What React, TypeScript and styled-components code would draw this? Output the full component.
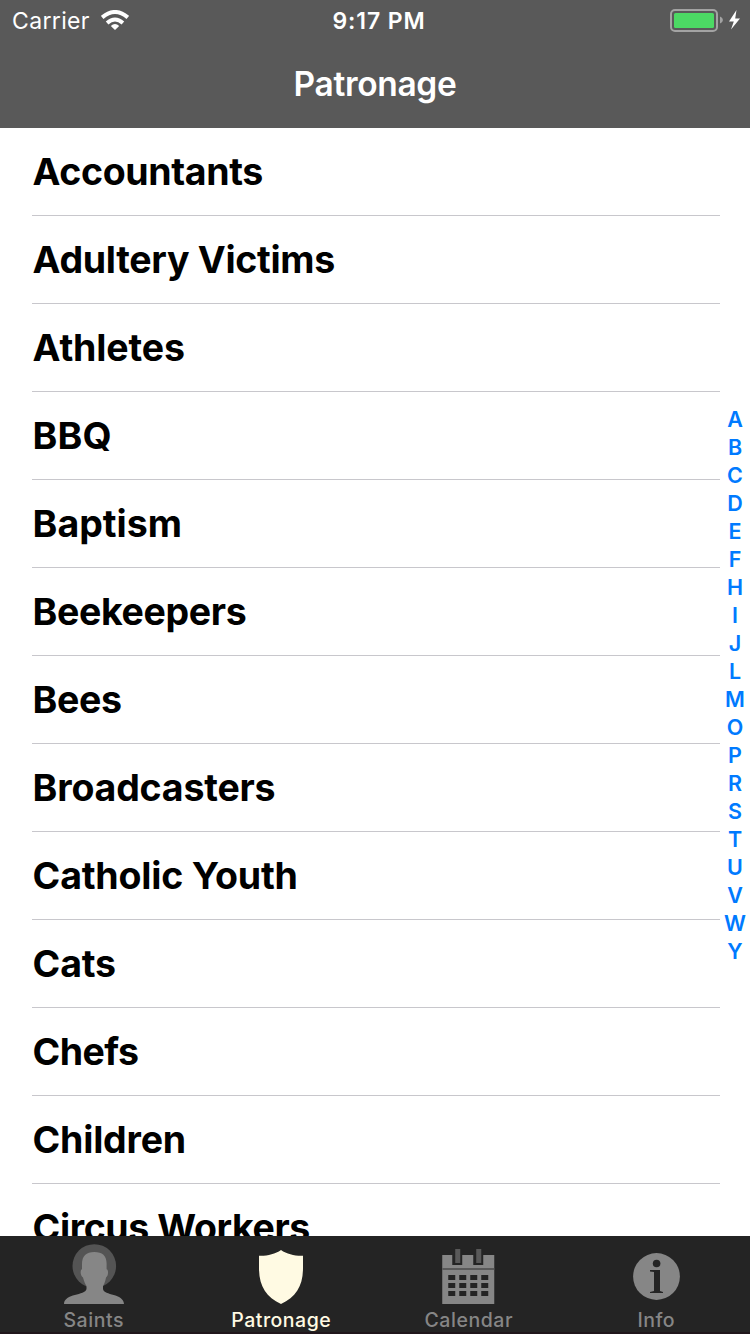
import React from "react";
import styled, { createGlobalStyle } from "styled-components";

const GlobalStyle = createGlobalStyle`
  * { box-sizing: border-box; }
  body { margin: 0; background: #fff; }
`;

const Screen = styled.div`
  width: 750px;
  height: 1334px;
  display: flex;
  flex-direction: column;
  overflow: hidden;
  background: #fff;
  font-family: Inter, "Liberation Sans", sans-serif;
`;

const Header = styled.header`
  flex: none;
  height: 128px;
  background: #595959;
  color: #fff;
`;

const StatusBar = styled.div`
  height: 40px;
  display: grid;
  grid-template-columns: 1fr auto 1fr;
  align-items: center;
  padding: 0 9px 0 12px;
`;

const Carrier = styled.div`
  display: flex;
  align-items: center;
  gap: 11px;
  font-size: 23px;
  line-height: 28px;
  letter-spacing: 0.35px;
  padding-top: 1px;

  svg {
    margin-bottom: 2px;
  }
`;

const Clock = styled.div`
  font-size: 23px;
  line-height: 28px;
  font-weight: 570;
  letter-spacing: 0.9px;
  padding: 1px 0 0 5px;
`;

const Power = styled.div`
  display: flex;
  justify-content: flex-end;
`;

const Title = styled.h1`
  margin: 0;
  height: 88px;
  line-height: 88px;
  text-align: center;
  font-size: 33.5px;
  font-weight: 570;
  letter-spacing: -0.33px;
`;

const Body = styled.main`
  flex: 1;
  min-height: 0;
  display: flex;
  overflow: hidden;
`;

const List = styled.ul`
  list-style: none;
  margin: 0;
  padding: 0 0 0 32px;
  width: 720px;
`;

const Row = styled.li<{ $tracking: number }>`
  height: 88px;
  padding-left: 0.6px;
  border-bottom: 1px solid #c8c7cc;
  line-height: 87px;
  font-size: 37.5px;
  font-weight: 680;
  letter-spacing: ${(p) => p.$tracking}px;
  color: #000;
  white-space: nowrap;
`;

const IndexBar = styled.nav`
  width: 30px;
  padding-top: 277px;
  display: flex;
  flex-direction: column;
  align-items: center;
`;

const IndexLetter = styled.span`
  flex: none;
  height: 28px;
  line-height: 28px;
  font-size: 21.5px;
  font-weight: 600;
  color: #007aff;
`;

const TabBar = styled.nav`
  flex: none;
  height: 98px;
  display: flex;
  background: #242424;
  border-bottom: 2px solid #21161c;
`;

const Tab = styled.div<{ $active?: boolean }>`
  width: 187.5px;
  display: flex;
  flex-direction: column;
  align-items: center;
  color: ${(p) => (p.$active ? "#fffae3" : "#868686")};
`;

const TabIcon = styled.svg`
  flex: none;
  display: block;
  width: 64px;
  height: 72px;
`;

const TabLabel = styled.span<{ $tracking: number }>`
  line-height: 24px;
  font-size: 19.5px;
  font-weight: 470;
  letter-spacing: ${(p) => p.$tracking}px;
`;

const rows: [string, number][] = [
  ["Accountants", -0.38],
  ["Adultery Victims", -0.3],
  ["Athletes", -0.15],
  ["BBQ", 0.2],
  ["Baptism", 0],
  ["Beekeepers", -0.35],
  ["Bees", -0.35],
  ["Broadcasters", -0.19],
  ["Catholic Youth", -0.19],
  ["Cats", -0.2],
  ["Chefs", -0.55],
  ["Children", -0.22],
  ["Circus Workers", -0.4],
];

const WifiIcon = () => (
  <svg width="28" height="20" viewBox="0 0 28 20">
    <g fill="none" stroke="#fff" strokeWidth="4">
      <path d="M1.2 7.4Q14-3.4 26.8 7.4" />
      <path d="M6.1 12.9Q14 6.1 21.9 12.9" />
    </g>
    <path d="M9.8 15.9Q14 12.3 18.2 15.9L14 20Z" fill="#fff" />
  </svg>
);

const BatteryIcon = () => (
  <svg width="71" height="24" viewBox="0 0 71 24">
    <rect x="1" y="2" width="46" height="21" rx="4" fill="none" stroke="#a3a3a3" strokeWidth="2" />
    <rect x="4" y="5" width="40" height="15" rx="1.5" fill="#4cd964" />
    <path d="M50 8.5C53.8 10 53.8 14 50 15.5Z" fill="#a3a3a3" />
    <path d="M66.5 2L59 13.5H63.8L61 21.5L70 10.5H65.2Z" fill="#fff" />
  </svg>
);

const SaintIcon = () => (
  <TabIcon viewBox="0 0 64 72">
    <circle cx="32.3" cy="30" r="21.8" fill="#545454" />
    <path
      d="M32.3 16C24 16 19.8 20 20 29V33.3C18 33.5 18.1 40 21 41.5C22 45 23 48 24.5 50V53C23 60 2.5 57 2 68H62C61.5 57 42 60 41 53V50C42.4 48 43.4 45 44 41.5C46.6 40 46.6 33.5 44.6 33.3V29C45 20 40.6 16 32.3 16Z"
      fill="#868686"
    />
  </TabIcon>
);

const ShieldIcon = () => (
  <TabIcon viewBox="0 0 64 72">
    <path d="M32 14C38 18.3 46 20 54 19.7V32C54 50 47 61 32 68C17 61 10 50 10 32V19.7C18 20 26 18.3 32 14Z" fill="#fffae3" />
  </TabIcon>
);

const CalendarIcon = () => (
  <TabIcon viewBox="0.75 0 64 72">
    <path d="M6 19H16V29H26V19H37V29H47V19H58V68H6Z" fill="#868686" />
    <path d="M19 13H24V27H19ZM40 13H45V27H40ZM6 32H58V34H6Z" fill="#595959" />
    {[39, 47, 55].map((y) =>
      [12, 23, 34, 45].map((x) => <rect key={`${x}-${y}`} x={x} y={y} width="7" height="5" fill="#242424" />)
    )}
  </TabIcon>
);

const InfoIcon = () => (
  <TabIcon viewBox="0 0 64 72">
    <circle cx="32.5" cy="40.5" r="23.4" fill="#868686" />
    <circle cx="32.6" cy="27.5" r="3.8" fill="#242424" />
    <path d="M26 34H36V55L39 56V57H26V56L30 55V36L26 35.5Z" fill="#242424" />
  </TabIcon>
);

export default function App() {
  return (
    <Screen>
      <GlobalStyle />
      <Header>
        <StatusBar>
          <Carrier>
            Carrier
            <WifiIcon />
          </Carrier>
          <Clock>9:17 PM</Clock>
          <Power>
            <BatteryIcon />
          </Power>
        </StatusBar>
        <Title>Patronage</Title>
      </Header>
      <Body>
        <List>
          {rows.map(([name, tracking]) => (
            <Row key={name} $tracking={tracking}>
              {name}
            </Row>
          ))}
        </List>
        <IndexBar>
          {"ABCDEFHIJLMOPRSTUVWY".split("").map((letter) => (
            <IndexLetter key={letter}>{letter}</IndexLetter>
          ))}
        </IndexBar>
      </Body>
      <TabBar>
        <Tab>
          <SaintIcon />
          <TabLabel $tracking={0.55}>Saints</TabLabel>
        </Tab>
        <Tab $active>
          <ShieldIcon />
          <TabLabel $tracking={0.5}>Patronage</TabLabel>
        </Tab>
        <Tab>
          <CalendarIcon />
          <TabLabel $tracking={0.55}>Calendar</TabLabel>
        </Tab>
        <Tab>
          <InfoIcon />
          <TabLabel $tracking={0.5}>Info</TabLabel>
        </Tab>
      </TabBar>
    </Screen>
  );
}
